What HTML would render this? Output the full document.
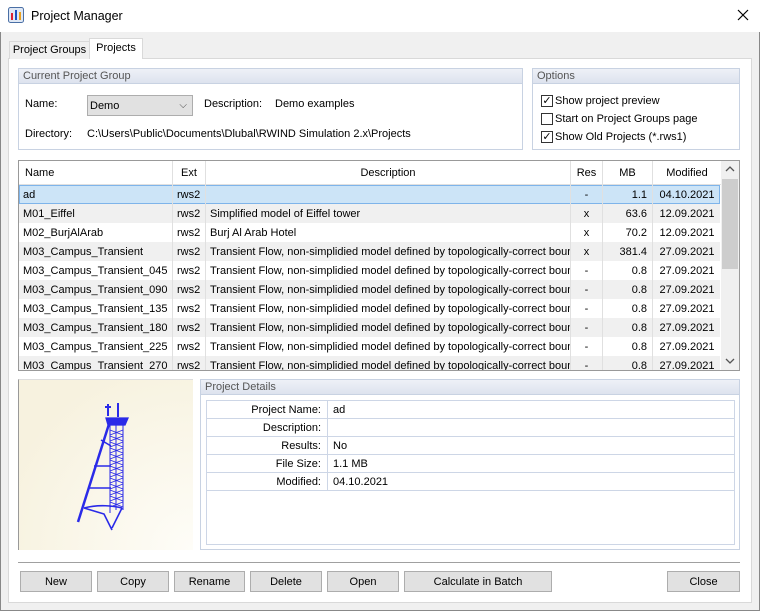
<!DOCTYPE html>
<html><head><style>
*{margin:0;padding:0;box-sizing:border-box}
body{width:760px;height:611px;background:#f0f0f0;font-family:"Liberation Sans",sans-serif;font-size:11px;color:#000;position:relative;overflow:hidden}
.a{position:absolute}
.win{left:0;top:0;width:760px;height:611px;border:1px solid #888;border-top:none;background:#f0f0f0}
.title{left:0;top:0;width:760px;height:32px;background:#fff}
.panel{left:8px;top:58px;width:744px;height:545px;background:#fff;border:1px solid #d9d9d9}
.gb{border:1px solid #c8d2e2;background:#fff}
.gbh{left:0;top:0;right:0;height:15px;background:linear-gradient(#eef1f7,#dde3ee);border-bottom:1px solid #c8d2e2;color:#555;padding-left:4px;line-height:14px;font-size:11px}
.btn{height:21px;border:1px solid #adadad;background:#e1e1e1;text-align:center;line-height:20px;top:571px}
.cb{width:12px;height:12px;border:1px solid #333;background:#fff}
.row{left:0;width:701px;height:19px;line-height:20px}
.c{position:absolute;top:0;height:19px;white-space:nowrap;overflow:hidden;padding-left:4px}
.row .c{border-right:1px solid #e0e0e0}
</style></head><body>
<div class="a win"></div>
<div class="a title"></div>
<svg class="a" style="left:8px;top:7px" width="16" height="16"><rect x="0.5" y="0.5" width="15" height="15" rx="2" fill="#dfe8f5" stroke="#4a6fa5"/><rect x="3" y="6" width="2" height="7" fill="#d23"/><rect x="7" y="3" width="2" height="10" fill="#1a50c0"/><rect x="11" y="5" width="2" height="8" fill="#e8a020"/></svg>
<div class="a" style="left:31px;top:9px;font-size:12.5px">Project Manager</div>
<svg class="a" style="left:737px;top:9px" width="12" height="12" stroke="#000" stroke-width="1.2"><path d="M1 1L11 11M11 1L1 11"/></svg>

<div class="a panel"></div>
<div class="a" style="left:9px;top:41px;width:81px;height:18px;border:1px solid #d9d9d9;border-bottom:none;background:#f0f0f0;text-align:center;line-height:17px">Project Groups</div>
<div class="a" style="left:89px;top:38px;width:54px;height:21px;border:1px solid #d9d9d9;border-bottom:none;background:#fff;text-align:center;line-height:18px">Projects</div>

<div class="a gb" style="left:18px;top:68px;width:505px;height:82px"><div class="a gbh">Current Project Group</div>
<div class="a" style="left:6px;top:29px">Name:</div>
<div class="a" style="left:68px;top:26px;width:106px;height:21px;border:1px solid #adadad;background:#e1e1e1;padding-left:2px;line-height:20px">Demo<span class="a" style="right:5px;top:0;font-size:10px;color:#444">⌵</span></div>
<div class="a" style="left:185px;top:29px">Description:</div>
<div class="a" style="left:256px;top:29px">Demo examples</div>
<div class="a" style="left:6px;top:59px">Directory:</div>
<div class="a" style="left:68px;top:59px">C:\Users\Public\Documents\Dlubal\RWIND Simulation 2.x\Projects</div>
</div>

<div class="a gb" style="left:532px;top:68px;width:208px;height:82px"><div class="a gbh">Options</div>
<div class="a cb" style="left:8px;top:26px;font-size:11px;line-height:10px;text-align:center">✓</div><div class="a" style="left:22px;top:26px">Show project preview</div>
<div class="a cb" style="left:8px;top:44px"></div><div class="a" style="left:22px;top:44px">Start on Project Groups page</div>
<div class="a cb" style="left:8px;top:62px;font-size:11px;line-height:10px;text-align:center">✓</div><div class="a" style="left:22px;top:62px">Show Old Projects (*.rws1)</div>
</div>

<div class="a" style="left:18px;top:160px;width:722px;height:211px;border:1px solid #999;background:#fff;overflow:hidden">
<div class="a" style="left:0;top:0;width:702px;height:24px;line-height:24px;background:#fff;border-bottom:1px solid #e0e0e0">
<div class="c" style="left:0;width:154px;height:24px;border-right:1px solid #e0e0e0;padding-left:6px">Name</div>
<div class="c" style="left:154px;width:33px;height:24px;border-right:1px solid #e0e0e0;text-align:center;padding:0">Ext</div>
<div class="c" style="left:187px;width:365px;height:24px;border-right:1px solid #e0e0e0;text-align:center;padding:0">Description</div>
<div class="c" style="left:552px;width:32px;height:24px;border-right:1px solid #e0e0e0;text-align:center;padding:0">Res</div>
<div class="c" style="left:584px;width:50px;height:24px;border-right:1px solid #e0e0e0;text-align:center;padding:0">MB</div>
<div class="c" style="left:634px;width:68px;height:24px;text-align:center;padding:0">Modified</div>
</div>
<div id="rows"></div>
<div class="a" style="left:702px;top:0;width:18px;height:209px;background:#f0f0f0"></div>
<div class="a" style="left:703px;top:18px;width:16px;height:90px;background:#cdcdcd"></div>
<svg class="a" style="left:706px;top:5px" width="10" height="6" fill="none" stroke="#555" stroke-width="1.3"><path d="M1 5L5 1L9 5"/></svg>
<svg class="a" style="left:706px;top:197px" width="10" height="6" fill="none" stroke="#555" stroke-width="1.3"><path d="M1 1L5 5L9 1"/></svg>
</div>

<div class="a" style="left:18px;top:379px;width:175px;height:171px;border-left:1px solid #999;border-top:1px solid #ddd;background:radial-gradient(ellipse at 100% 100%,#fefdf8,#f7f2df 80%)">
<svg width="175" height="171" style="position:absolute;left:0;top:0" fill="none" stroke="#2a2ae8" stroke-width="1.3">
<path d="M89 24v12M86 27h6M99 23v14" stroke-width="2"/>
<path d="M87 38h22l-3 7H89z" fill="#2a2ae8"/>
<path d="M90 44L59 142" stroke-width="2.5"/>
<path d="M91 45v88M104 45v85M97 45v85" stroke-width="1"/>
<path d="M91 50l13 5M104 50l-13 5M91 56l13 5M104 56l-13 5M91 62l13 5M104 62l-13 5M91 68l13 5M104 68l-13 5M91 74l13 5M104 74l-13 5M91 80l13 5M104 80l-13 5M91 86l13 5M104 86l-13 5M91 92l13 5M104 92l-13 5M91 98l13 5M104 98l-13 5M91 104l13 5M104 104l-13 5M91 110l13 5M104 110l-13 5M91 116l13 5M104 116l-13 5M91 122l13 5M104 122l-13 5" stroke-width="0.9"/>
<path d="M82 60l10 6M75 86h17M70 108h22M65 128c15-4 30-2 38 0M65 128l20 6 8 16M103 128l-10 20" stroke-width="1.6"/>
</svg></div>

<div class="a gb" style="left:200px;top:379px;width:540px;height:171px"><div class="a gbh">Project Details</div>
<div class="a" style="left:5px;top:20px;width:529px;height:145px;border:1px solid #cdd6e6" id="det"></div>
</div>

<div class="a" style="left:18px;top:562px;width:722px;height:1px;background:#a0a0a0"></div>
<div class="a btn" style="left:20px;width:72px">New</div>
<div class="a btn" style="left:97px;width:72px">Copy</div>
<div class="a btn" style="left:174px;width:71px">Rename</div>
<div class="a btn" style="left:250px;width:72px">Delete</div>
<div class="a btn" style="left:327px;width:72px">Open</div>
<div class="a btn" style="left:404px;width:148px">Calculate in Batch</div>
<div class="a btn" style="left:667px;width:73px">Close</div>

<script>
var L="Transient Flow, non-simplidied model defined by topologically-correct boundary";
var d=[["ad","","-","1.1","04.10.2021"],["M01_Eiffel","Simplified model of Eiffel tower","x","63.6","12.09.2021"],["M02_BurjAlArab","Burj Al Arab Hotel","x","70.2","12.09.2021"],["M03_Campus_Transient",L,"x","381.4","27.09.2021"],["M03_Campus_Transient_045",L,"-","0.8","27.09.2021"],["M03_Campus_Transient_090",L,"-","0.8","27.09.2021"],["M03_Campus_Transient_135",L,"-","0.8","27.09.2021"],["M03_Campus_Transient_180",L,"-","0.8","27.09.2021"],["M03_Campus_Transient_225",L,"-","0.8","27.09.2021"],["M03_Campus_Transient_270",L,"-","0.8","27.09.2021"]];
var h="";d.forEach(function(r,i){var bg=i==0?"#cce4f7":(i%2?"#f0f0f0":"#fff");var bd=i==0?"outline:1px solid #7eb4ea;outline-offset:-1px;":"";
h+='<div class="a row" style="top:'+(24+i*19)+'px;background:'+bg+';'+bd+'"><div class="c" style="left:0;width:154px">'+r[0]+'</div><div class="c" style="left:154px;width:33px">rws2</div><div class="c" style="left:187px;width:365px">'+r[1]+'</div><div class="c" style="left:552px;width:32px;text-align:center;padding:0">'+r[2]+'</div><div class="c" style="left:584px;width:50px;text-align:right;padding-right:5px">'+r[3]+'</div><div class="c" style="left:634px;width:68px;border:none;text-align:center;padding:0">'+r[4]+'</div></div>';});
document.getElementById("rows").innerHTML=h;
var p=[["Project Name:","ad"],["Description:",""],["Results:","No"],["File Size:","1.1 MB"],["Modified:","04.10.2021"]];h="";
p.forEach(function(r,i){h+='<div class="a" style="left:0;top:'+(i*18)+'px;width:527px;height:18px;border-bottom:1px solid #cdd6e6;line-height:18px"><div class="a" style="left:0;width:121px;height:17px;border-right:1px solid #cdd6e6;text-align:right;padding-right:6px">'+r[0]+'</div><div class="a" style="left:126px">'+r[1]+'</div></div>';});
document.getElementById("det").innerHTML=h;
</script>
</body></html>
